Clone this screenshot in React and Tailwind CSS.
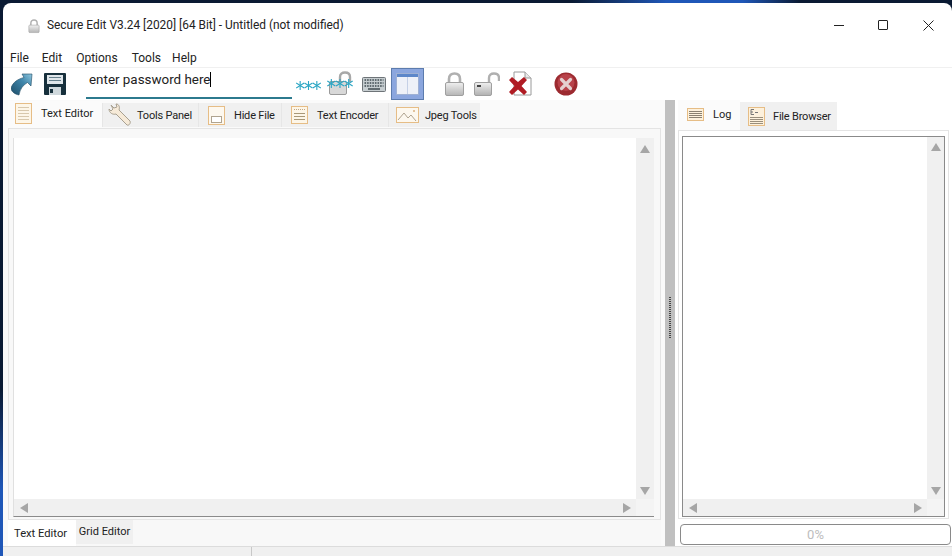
const font = { fontFamily: 'Roboto,"Noto Sans",sans-serif' };

const Lines = ({ w = 20, h = 24, top = 4 }) => {
  const ys = [];
  for (let y = top; y < h - 2; y += 3) ys.push(y);
  return (
    <svg width={w} height={h} viewBox={`0 0 ${w} ${h}`}>
      <rect x="0.5" y="0.5" width={w - 1} height={h - 1} fill="#fdf6e8" stroke="#e6bd86" />
      {ys.map((y) => <line key={y} x1="3" x2={w - 3} y1={y + 0.5} y2={y + 0.5} stroke="#d8c8ac" />)}
    </svg>
  );
};

const Wrench = () => (
  <svg width="24" height="24" viewBox="0 0 24 24" fill="none">
    <path d="M3 2 L6 5 L9 4 L8 1 C11 1 12 4 11 7 L22 18 C23 20 21 23 19 22 L8 11 C5 12 1 10 1 6 L3 8 L5 6 Z" fill="#f6ead8" stroke="#a8a090" strokeWidth="1" />
  </svg>
);

const HideIcon = () => (
  <svg width="17" height="19" viewBox="0 0 17 19">
    <rect x="0.5" y="0.5" width="16" height="18" fill="#fdf8ef" stroke="#e6bd86" />
    <rect x="3.5" y="10.5" width="10" height="6" fill="#fff" stroke="#b0a490" />
  </svg>
);

const EncIcon = () => (
  <svg width="17" height="18" viewBox="0 0 17 18">
    <rect x="0.5" y="0.5" width="16" height="17" fill="#fdf6e8" stroke="#e6bd86" />
    <line x1="3" x2="14" y1="3.5" y2="3.5" stroke="#c0a888" strokeDasharray="1 1" />
    <line x1="3" x2="14" y1="7.5" y2="7.5" stroke="#a89878" />
    <line x1="3" x2="14" y1="10.5" y2="10.5" stroke="#a89878" />
    <line x1="3" x2="14" y1="13.5" y2="13.5" stroke="#a89878" />
  </svg>
);

const JpegIcon = () => (
  <svg width="23" height="16" viewBox="0 0 23 16" fill="none">
    <rect x="0.5" y="0.5" width="22" height="15" fill="#fdf8ef" stroke="#e6bd86" />
    <path d="M2 13 L8 6 L12 11 L15 8 L20 14" stroke="#b0a490" />
    <circle cx="18" cy="4" r="1" fill="#d8b080" />
  </svg>
);

const LogIcon = () => (
  <svg width="17" height="13" viewBox="0 0 17 13">
    <rect x="0.5" y="0.5" width="16" height="12" fill="#fdf1dc" stroke="#e6bd86" />
    {[3, 5, 7, 9].map((y) => <line key={y} x1="2" x2="15" y1={y + 0.5} y2={y + 0.5} stroke="#8a8070" />)}
  </svg>
);

const BrowseIcon = () => (
  <svg width="17" height="19" viewBox="0 0 17 19">
    <rect x="0.5" y="0.5" width="16" height="18" fill="#fdf1dc" stroke="#e6bd86" />
    <path d="M3 2.5H6M3 2.5V7.5H6M3 5H5" stroke="#777" fill="none" />
    <line x1="7" x2="10" y1="5.5" y2="5.5" stroke="#777" />
    {[10, 12, 14, 16].map((y) => <line key={y} x1="2" x2="15" y1={y + 0.5} y2={y + 0.5} stroke="#9a8f7c" />)}
  </svg>
);

const Arrow = () => (
  <svg width="22" height="23" viewBox="0 0 22 23">
    <defs>
      <linearGradient id="ar" x1="0" y1="1" x2="1" y2="0">
        <stop offset="0" stopColor="#1d4d68" />
        <stop offset="0.6" stopColor="#3f86ab" />
        <stop offset="1" stopColor="#8fc6de" />
      </linearGradient>
    </defs>
    <path d="M11 1 L21 1 L20 13 L16.5 9.5 C12 12 9 16 8 22 C3 21 0 18 0 15 C2 9 7 6 13 4.5 Z" fill="url(#ar)" stroke="#1f4a63" strokeWidth="0.6" />
  </svg>
);

const Floppy = () => (
  <svg width="22" height="22" viewBox="0 0 22 22">
    <rect x="0" y="0" width="22" height="22" rx="1" fill="#17303c" />
    <rect x="3" y="2" width="16" height="9" fill="#dfe6ea" />
    <line x1="5" x2="17" y1="4.5" y2="4.5" stroke="#66808c" />
    <line x1="5" x2="17" y1="7.5" y2="7.5" stroke="#66808c" />
    <rect x="5" y="14" width="12" height="8" fill="#cfd8dc" />
    <rect x="6" y="16" width="3" height="4" fill="#17303c" />
  </svg>
);

const Stars = ({ n = 3, w = 25 }) => {
  const step = w / n;
  return (
    <svg width={w} height="11" viewBox={`0 0 ${w} 11`} stroke="#2ba6c4" strokeWidth="1.1">
      {Array.from({ length: n }).map((_, i) => {
        const c = step * i + step / 2;
        return (
          <g key={i}>
            <line x1={c} x2={c} y1="1" y2="10" />
            <line x1={c - 4} x2={c + 4} y1="3" y2="8" />
            <line x1={c - 4} x2={c + 4} y1="8" y2="3" />
          </g>
        );
      })}
    </svg>
  );
};

const Lock = ({ w = 21, h = 24 }) => (
  <svg width={w} height={h} viewBox="0 0 21 24" fill="none">
    <defs>
      <linearGradient id="lk" x1="0" y1="0" x2="0" y2="1">
        <stop offset="0" stopColor="#f0f0f0" />
        <stop offset="1" stopColor="#b5b5b5" />
      </linearGradient>
    </defs>
    <path d="M5 11 V7 C5 3 7.5 1.5 10.5 1.5 C13.5 1.5 16 3 16 7 V11" stroke="#b0b0b0" strokeWidth="2.6" />
    <rect x="1.5" y="10.5" width="18" height="13" rx="1.5" fill="url(#lk)" stroke="#a0a0a0" />
  </svg>
);

const OpenLock = () => (
  <svg width="26" height="24" viewBox="0 0 26 24" fill="none">
    <defs>
      <linearGradient id="ol" x1="0" y1="0" x2="0" y2="1">
        <stop offset="0" stopColor="#f0f0f0" />
        <stop offset="1" stopColor="#b0b0b0" />
      </linearGradient>
    </defs>
    <path d="M15 11 V6 C15 3 17 1.5 20 1.5 C23 1.5 25 3 25 6 V9" stroke="#b0b0b0" strokeWidth="2.4" />
    <rect x="0.5" y="10.5" width="17" height="13" rx="1.5" fill="url(#ol)" stroke="#a0a0a0" />
    <rect x="3" y="13" width="4" height="2" fill="#444" />
  </svg>
);

const LockStars = () => (
  <div className="relative w-[28px] h-[26px]">
    <div className="absolute left-[2px] top-0">
      <svg width="26" height="24" viewBox="0 0 26 24" fill="none">
        <path d="M11 11 V6 C11 3 13 1.5 16 1.5 C19 1.5 21 3 21 6 V11" stroke="#a8a8a8" strokeWidth="2.4" />
        <rect x="0.5" y="10.5" width="17" height="13" rx="1.5" fill="#d8d8d8" stroke="#9a9a9a" />
      </svg>
    </div>
    <div className="absolute left-0 top-[7px]">
      <Stars n={3} w={26} />
    </div>
  </div>
);

const Keyboard = () => (
  <svg width="24" height="15" viewBox="0 0 24 15">
    <rect x="0.5" y="0.5" width="23" height="14" rx="1" fill="#c6cdd0" stroke="#6e7478" />
    {[3, 6, 9].map((y) => (
      <line key={y} x1="2.5" x2="21.5" y1={y} y2={y} stroke="#3f4a50" strokeWidth="1.6" strokeDasharray="1.6 1" />
    ))}
    <line x1="6" x2="18" y1="12" y2="12" stroke="#3f4a50" strokeWidth="1.4" />
  </svg>
);

const Split = () => (
  <svg width="23" height="22" viewBox="0 0 23 22">
    <rect x="0.5" y="0.5" width="22" height="21" fill="#eef1f8" stroke="#9fb1d4" />
    <rect x="1" y="1" width="21" height="3" fill="#5d87c9" />
    <line x1="11.5" x2="11.5" y1="4" y2="21" stroke="#c5d0e6" />
  </svg>
);

const DocX = () => (
  <svg width="24" height="26" viewBox="0 0 24 26">
    <path d="M6 1 H17 L23 7 V24 H6 Z" fill="#fff" stroke="#9a9a9a" />
    <path d="M17 1 V7 H23" fill="#e8e8e8" stroke="#9a9a9a" />
    <path d="M1 9 L4 6 L10 11 L16 6 L19 9 L13.5 15 L19 21 L16 24 L10 18.5 L4 24 L1 21 L6.5 15 Z" fill="#b01c24" />
  </svg>
);

const Stop = () => (
  <svg width="24" height="24" viewBox="0 0 24 24">
    <circle cx="12" cy="12" r="11.5" fill="#9c2a30" />
    <circle cx="12" cy="10.5" r="8.5" fill="#b8424a" />
    <path d="M7.5 7.5 L16.5 16.5 M16.5 7.5 L7.5 16.5" stroke="#e4d0d0" strokeWidth="3.2" strokeLinecap="round" />
  </svg>
);

const Tri = ({ dir, cls = "" }) => {
  const p = {
    up: "0,8 5,0 10,8",
    down: "0,0 10,0 5,8",
    left: "8,0 8,10 0,5",
    right: "0,0 0,10 8,5",
  }[dir];
  const vertical = dir === "up" || dir === "down";
  return (
    <svg className={cls} width={vertical ? 10 : 8} height={vertical ? 8 : 10} viewBox={vertical ? "0 0 10 8" : "0 0 8 10"}>
      <polygon points={p} fill="#a6a6a6" />
    </svg>
  );
};

const Tab = ({ active, icon, label, w, iconW }) => (
  <div
    className={
      active
        ? "flex items-center h-[27px] pb-[3px] bg-[#fbfbfb] shrink-0"
        : "flex items-center h-[24px] mt-[2px] bg-[#f0f0f0] border-l border-[#e6e6e6] shrink-0"
    }
    style={{ width: w }}
  >
    <div className="flex justify-center shrink-0" style={{ width: iconW }}>{icon}</div>
    <span className={active ? "text-[11px] leading-none text-[#222] whitespace-nowrap" : "text-[11px] tracking-[-0.2px] leading-none text-[#222] whitespace-nowrap"}>{label}</span>
  </div>
);

export default function App() {
  return (
    <div
      className="w-[952px] h-[556px] overflow-hidden pl-[3px] pt-[3px] [background:linear-gradient(90deg,#0a1a33_60%,#1f57b8_70%,#1f57b8_78%,#0a1a33_84%)_top/100%_3px_no-repeat,linear-gradient(180deg,#0a1a33_70%,#1f57b8_88%)]"
      style={font}
    >
      <div className="w-[949px] h-[553px] bg-white rounded-t-lg flex flex-col text-[#222] overflow-hidden">
        {/* Title bar */}
        <div className="h-[44px] flex items-center shrink-0">
          <div className="ml-[25px] mt-[1px]"><Lock w={12} h={16} /></div>
          <span className="ml-[7px] mt-[1px] text-[11.9px] text-[#222] whitespace-nowrap">Secure Edit V3.24 [2020] [64 Bit] - Untitled (not modified)</span>
          <div className="ml-auto flex items-center mr-[18px] gap-[34px]">
            <div className="w-[10px] h-[1px] bg-[#222]" />
            <div className="w-[10px] h-[10px] border border-[#222] rounded-[1px]" />
            <svg width="11" height="11" viewBox="0 0 11 11" className="ml-[1px]">
              <path d="M0.5 0.5 L10.5 10.5 M10.5 0.5 L0.5 10.5" stroke="#222" strokeWidth="1" />
            </svg>
          </div>
        </div>

        {/* Menu */}
        <div className="h-[21px] flex items-center pl-[7px] pt-[1px] text-[12px] shrink-0 border-b border-[#f0f0f0]">
          <span>File</span>
          <span className="ml-[13px]">Edit</span>
          <span className="ml-[14px]">Options</span>
          <span className="ml-[14px]">Tools</span>
          <span className="ml-[11px]">Help</span>
        </div>

        {/* Toolbar */}
        <div className="h-[32px] flex items-center shrink-0">
          <div className="ml-[8px]"><Arrow /></div>
          <div className="ml-[11px]"><Floppy /></div>
          <div className="ml-[20px] w-[206px] h-[31px] border-b-2 border-[#2c7a8e] pl-[3px] pb-[6px] flex items-center self-start">
            <span className="text-[13.4px] leading-none whitespace-nowrap">enter password here</span>
            <span className="w-[1px] h-[15px] bg-black" />
          </div>
          <div className="ml-[4px] mt-[2px]"><Stars /></div>
          <div className="ml-[6px] mt-[-1px]"><LockStars /></div>
          <div className="ml-[7px]"><Keyboard /></div>
          <div className="ml-[5px] w-[33px] h-[32px] bg-[#8ba6de] border border-[#5c7cae] flex items-center justify-center"><Split /></div>
          <div className="ml-[20px]"><Lock /></div>
          <div className="ml-[9px]"><OpenLock /></div>
          <div className="ml-[8px] mt-[-1px]"><DocX /></div>
          <div className="ml-[22px]"><Stop /></div>
        </div>

        {/* Panes */}
        <div className="flex-1 flex min-h-0">
          {/* Left */}
          <div className="w-[662px] shrink-0 flex flex-col pl-[5px] pr-[4px] bg-[#fafafa]">
            <div className="flex h-[27px] shrink-0 mt-[1px]">
              <Tab active w={94} iconW={33} icon={<div className="mr-[2px] flex"><Lines w={17} h={21} /></div>} label="Text Editor" />
              <Tab w={96} iconW={34} icon={<Wrench />} label="Tools Panel" />
              <Tab w={83} iconW={35} icon={<HideIcon />} label="Hide File" />
              <Tab w={107} iconW={35} icon={<EncIcon />} label="Text Encoder" />
              <Tab w={92} iconW={36} icon={<JpegIcon />} label="Jpeg Tools" />
            </div>
            <div className="h-[392px] shrink-0 border border-[#e4e4e4] bg-[#f8f8f8] pl-[4px] pr-[6px] pt-[9px] pb-[2px] flex flex-col">
              <div className="flex-1 flex flex-col min-h-0 border-b border-[#8a8a8a] border-l border-l-[#e0e0e0] bg-white">
                <div className="flex-1 flex min-h-0">
                  <div className="flex-1" />
                  <div className="w-[18px] bg-[#f0f0f0] flex flex-col items-center justify-between pt-[7px] pb-[4px]">
                    <Tri dir="up" />
                    <Tri dir="down" />
                  </div>
                </div>
                <div className="h-[17px] shrink-0 flex">
                  <div className="flex-1 bg-[#f0f0f0] flex items-center justify-between pl-[6px] pr-[5px]">
                    <Tri dir="left" />
                    <Tri dir="right" />
                  </div>
                  <div className="w-[18px] bg-[#f4f4f4]" />
                </div>
              </div>
            </div>
            <div className="flex h-[26px] shrink-0 bg-[#f8f8f8]">
              <div className="w-[68px] h-[26px] flex items-center pl-[6px] bg-white text-[11.2px] pt-[3px] whitespace-nowrap">Text Editor</div>
              <div className="w-[57px] h-[24px] flex items-center justify-center bg-[#f0f0f0] text-[11px] whitespace-nowrap">Grid Editor</div>
            </div>
          </div>

          {/* Splitter */}
          <div className="w-[10px] shrink-0 bg-[#c0c0c0] flex justify-center items-center">
            <div className="w-[2px] h-[42px] mt-[-10px] bg-[repeating-linear-gradient(180deg,#444_0,#444_1px,transparent_1px,transparent_2px)]" />
          </div>

          {/* Right */}
          <div className="flex-1 min-w-0 flex flex-col pl-[3px] bg-white">
            <div className="flex h-[30px] shrink-0">
              <div className="w-[62px] h-[30px] bg-[#fbfbfb] flex items-center shrink-0">
                <div className="w-[35px] flex justify-center shrink-0 mb-[2px] pr-[1px]"><LogIcon /></div>
                <span className="text-[11px] leading-none mb-[2px]">Log</span>
              </div>
              <div className="w-[97px] h-[28px] mt-[2px] bg-[#f0f0f0] flex items-center shrink-0">
                <div className="w-[33px] flex justify-center pr-[1px] shrink-0"><BrowseIcon /></div>
                <span className="text-[11px] tracking-[-0.2px] leading-none whitespace-nowrap">File Browser</span>
              </div>
            </div>
            <div className="h-[389px] shrink-0 w-[271px] border border-[#e4e4e4] px-[3px] pt-[5px] pb-[1px] flex flex-col">
              <div className="flex-1 flex flex-col min-h-0 border border-[#8a8a8a] bg-white">
                <div className="flex-1 flex min-h-0">
                  <div className="flex-1" />
                  <div className="w-[17px] bg-[#f0f0f0] flex flex-col items-center justify-between pt-[6px] pb-[4px]">
                    <Tri dir="up" />
                    <Tri dir="down" />
                  </div>
                </div>
                <div className="h-[17px] shrink-0 flex">
                  <div className="flex-1 bg-[#f0f0f0] flex items-center justify-between pl-[6px] pr-[5px]">
                    <Tri dir="left" />
                    <Tri dir="right" />
                  </div>
                  <div className="w-[17px] bg-[#f4f4f4]" />
                </div>
              </div>
            </div>
            <div className="mt-[5px] ml-[2px] w-[271px] h-[21px] shrink-0 border border-[#8a8a8a] rounded-[4px] flex items-center justify-center text-[13px] text-[#bdbdbd]">0%</div>
          </div>
        </div>

        {/* Status bar */}
        <div className="h-[10px] shrink-0 bg-[#f0f0f0] border-t border-[#dcdcdc] flex">
          <div className="w-[249px] border-r border-[#c8c8c8]" />
        </div>
      </div>
    </div>
  );
}
